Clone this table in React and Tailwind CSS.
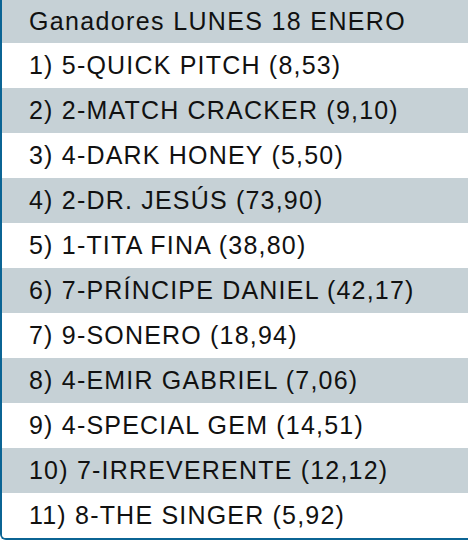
import React from "react";

const winners = [
  "1) 5-QUICK PITCH (8,53)",
  "2) 2-MATCH CRACKER (9,10)",
  "3) 4-DARK HONEY (5,50)",
  "4) 2-DR. JESÚS (73,90)",
  "5) 1-TITA FINA (38,80)",
  "6) 7-PRÍNCIPE DANIEL (42,17)",
  "7) 9-SONERO (18,94)",
  "8) 4-EMIR GABRIEL (7,06)",
  "9) 4-SPECIAL GEM (14,51)",
  "10) 7-IRREVERENTE (12,12)",
  "11) 8-THE SINGER (5,92)",
];

const App = () => {
  return (
    <div className="w-[468px] h-[544px] bg-white overflow-hidden">
      {/* Results table */}
      <div className="w-[480px] border-l-2 border-b-2 border-[#0b6494] rounded-bl-md overflow-hidden text-[#111] text-[25px] tracking-[1.2px] font-['Liberation_Sans',Arial,sans-serif]">
        <div className="h-[43px] flex items-center pl-[27px] bg-[#c6d1d6] tracking-[1.35px]">
          Ganadores LUNES 18 ENERO
        </div>
        {winners.map((w, i) => (
          <div
            key={i}
            className={`h-[45px] flex items-center pl-[27px] ${
              i % 2 === 1 ? "bg-[#c6d1d6]" : "bg-white"
            }`}
          >
            {w}
          </div>
        ))}
      </div>
    </div>
  );
};

export default App;
